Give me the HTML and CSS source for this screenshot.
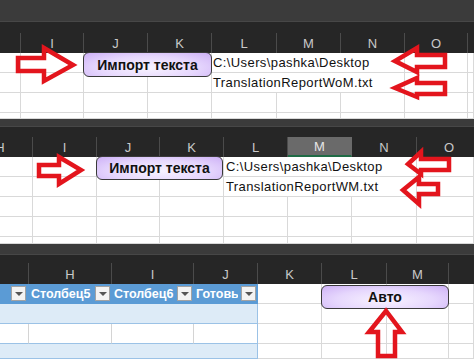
FILE: index.html
```html
<!DOCTYPE html>
<html lang="ru">
<head>
<meta charset="utf-8">
<title>Импорт текста</title>
<link rel="stylesheet" href="styles.css">
</head>
<body>
<div class="sheet s1">
  <div class="band"></div>
  <div class="gap"></div>
  <div class="colhdr cols">
    <span class="part"><i>H</i></span><span>I</span><span>J</span><span>K</span><span>L</span><span>M</span><span>N</span><span>O</span><span class="partr"></span>
  </div>
  <div class="row cols">
    <span></span><span></span><span></span><span></span><span class="txt span3">C:\Users\pashka\Desktop</span><span></span><span></span>
  </div>
  <div class="row cols">
    <span></span><span></span><span></span><span></span><span class="txt span3">TranslationReportWoM.txt</span><span></span><span></span>
  </div>
  <div class="row cols">
    <span></span><span></span><span></span><span></span><span></span><span></span><span></span><span></span><span></span>
  </div>
  <div class="row cols last">
    <span></span><span></span><span></span><span></span><span></span><span></span><span></span><span></span><span></span>
  </div>
  <div class="btn b1">Импорт текста</div>
  <svg class="arrows" width="474" height="119" viewBox="0 0 474 119">
    <path d="M18 58 H44 V48 L73 65 L44 81 V71 H18 Z"/>
    <path d="M445 55 H417 V48 L395 61 L417 72 V67 H445 Z"/>
    <path d="M445 83 H417 V78 L395 88 L417 97 V94 H445 Z"/>
  </svg>
</div>

<div class="sheet s2">
  <div class="band"></div>
  <div class="gap"></div>
  <div class="colhdr cols">
    <span class="part"><i>H</i></span><span>I</span><span>J</span><span>K</span><span>L</span><span class="sel">M</span><span>N</span><span class="partr"><i>O</i></span>
  </div>
  <div class="row cols">
    <span></span><span></span><span></span><span></span><span class="txt span3">C:\Users\pashka\Desktop</span><span></span>
  </div>
  <div class="row cols">
    <span></span><span></span><span></span><span></span><span class="txt span3">TranslationReportWM.txt</span><span></span>
  </div>
  <div class="row cols">
    <span></span><span></span><span></span><span></span><span></span><span></span><span></span><span></span>
  </div>
  <div class="row cols">
    <span></span><span></span><span></span><span></span><span></span><span></span><span></span><span></span>
  </div>
  <div class="row cols last">
    <span></span><span></span><span></span><span></span><span></span><span></span><span></span><span></span>
  </div>
  <div class="btn b2">Импорт текста</div>
  <svg class="arrows" width="474" height="125" viewBox="0 0 474 125">
    <path d="M39 46 H59 V38 L81 51 L59 65 V57 H39 Z"/>
    <path d="M449 40 H421 V33 L408 45 L421 55 V51 H449 Z"/>
    <path d="M438 65 H419 V58 L403 71 L419 85 V75 H438 Z"/>
  </svg>
</div>

<div class="sheet s3">
  <div class="band"></div>
  <div class="gap"></div>
  <div class="colhdr cols">
    <span></span><span>H</span><span>I</span><span>J</span><span>K</span><span>L</span><span>M</span><span class="partr"></span>
  </div>
  <div class="row cols thead">
    <span class="th"><b class="dd"></b></span>
    <span class="th"><em>Столбец5</em><b class="dd"></b></span>
    <span class="th"><em>Столбец6</em><b class="dd"></b></span>
    <span class="th"><em>Готовый</em><b class="dd"></b></span>
    <span></span><span></span><span></span><span></span>
  </div>
  <div class="row cols band-row">
    <span class="tb"></span><span class="tb"></span><span class="tb"></span><span class="tb tr"></span><span></span><span></span><span></span><span></span>
  </div>
  <div class="row cols">
    <span class="tw"></span><span class="tw"></span><span class="tw"></span><span class="tw tr"></span><span></span><span></span><span></span><span></span>
  </div>
  <div class="row cols band-row last">
    <span class="tb"></span><span class="tb"></span><span class="tb"></span><span class="tb tr"></span><span></span><span></span><span></span><span></span>
  </div>
  <div class="btn b3">Авто</div>
  <svg class="arrows" width="474" height="115" viewBox="0 0 474 115">
    <path d="M378 112 V88 H369 L386 67 L402 88 H395 V112 Z"/>
  </svg>
</div>
</body>
</html>
```

FILE: styles.css
```css
* { box-sizing: border-box; }

body {
  margin: 0;
  width: 474px;
  height: 359px;
  overflow: hidden;
  background: #ffffff;
  font-family: "Liberation Sans", Arial, sans-serif;
}

.sheet {
  position: relative;
  display: flex;
  flex-direction: column;
  overflow: hidden;
  background: #ffffff;
}

.s1 { height: 119px; }
.s2 { height: 125px; }
.s3 { height: 115px; }

.band {
  background: #3b3b3b;
  border-bottom: 1px solid #474747;
  flex: none;
}
.s1 .band { height: 22px; }
.s2 .band { height: 8px; }
.s3 .band { height: 11px; }

.gap {
  background: #262626;
  flex: none;
}
.s1 .gap { height: 11px; }
.s2 .gap { height: 10px; }
.s3 .gap { height: 8px; }

.cols { display: grid; }
.s1 .cols { grid-template-columns: 21px 63px 64px 64px 65px 64px 64px 63px 1fr; }
.s2 .cols { grid-template-columns: 33px 64px 63px 64px 64px 64px 65px 1fr; }
.s3 .cols { grid-template-columns: 29px 83px 82px 64px 64px 65px 62px 1fr; }

.colhdr {
  flex: none;
  height: 20px;
  background: #262626;
  color: #c9c9c9;
  font-size: 13px;
}
.s3 .colhdr { height: 21px; }

.colhdr > span {
  display: flex;
  align-items: center;
  justify-content: center;
  border-right: 1px solid #4b4b4b;
  overflow: hidden;
  padding-top: 1px;
  min-width: 0;
}

.colhdr > span.part { justify-content: flex-end; }
.colhdr > span.partr { justify-content: flex-start; border-right: none; }
.colhdr > span.part i,
.colhdr > span.partr i {
  font-style: normal;
  flex: none;
  width: 64px;
  text-align: center;
}

.colhdr > span.sel {
  background: #6a6a6a;
  color: #e6e6e6;
  border-bottom: 2px solid #1f6b45;
  border-right-color: #6a6a6a;
}

.row {
  flex: none;
  height: 20px;
}
.row.last { height: auto; flex: 1; }

.row > span {
  border-right: 1px solid #d9d9d9;
  border-bottom: 1px solid #d9d9d9;
  min-width: 0;
}

.span3 { grid-column: span 3; }

.txt {
  font-size: 13px;
  letter-spacing: 0.4px;
  color: #111111;
  white-space: nowrap;
  line-height: 19px;
  padding-left: 1px;
}
.s2 .txt { padding-left: 2px; }

/* table */
.thead > span.th {
  background: #5b9bd5;
  border-right: none;
  border-bottom: 1px solid #5b9bd5;
  display: flex;
  align-items: center;
  padding: 0 2px 0 2px;
  gap: 3px;
  overflow: hidden;
}
.thead > span.th:first-child { justify-content: flex-end; padding-right: 3px; }

.th em {
  font-style: normal;
  font-weight: bold;
  font-size: 12.5px;
  color: #ffffff;
  flex: 1;
  white-space: nowrap;
  overflow: hidden;
  min-width: 0;
}

.dd {
  flex: none;
  width: 15px;
  height: 15px;
  background: #f3f3f3;
  border: 1px solid #a3a3a3;
  display: flex;
  align-items: center;
  justify-content: center;
}
.dd::after {
  content: "";
  border-left: 4px solid transparent;
  border-right: 4px solid transparent;
  border-top: 4px solid #555555;
}

.row > span.tb {
  background: #ddebf7;
  border-right: none;
  border-bottom: 1px solid #9bc2e6;
}
.row > span.tw {
  background: #ffffff;
  border-right: 1px solid #d4d4d4;
  border-bottom: 1px solid #9bc2e6;
}
.row > span.tr { border-right: 1px solid #9bc2e6; }

/* floating shapes */
.btn {
  position: absolute;
  display: flex;
  align-items: center;
  justify-content: center;
  border: 1px solid #3a3a3a;
  border-radius: 6px;
  background: radial-gradient(ellipse at 50% 65%, #f8f3ff 0%, #e6d7fd 55%, #cdb0f6 100%);
  font-weight: bold;
  font-size: 14px;
  color: #111111;
  white-space: nowrap;
}
.b1 { left: 83px; top: 52px; width: 129px; height: 25px; }
.b2 { left: 96px; top: 37px; width: 127px; height: 24px; }
.b3 { left: 321px; top: 41px; width: 128px; height: 24px; }

.arrows {
  position: absolute;
  left: 0;
  top: 0;
  pointer-events: none;
}
.arrows path {
  fill: none;
  stroke: #e3151d;
  stroke-width: 4.5;
  stroke-linejoin: miter;
}
```
